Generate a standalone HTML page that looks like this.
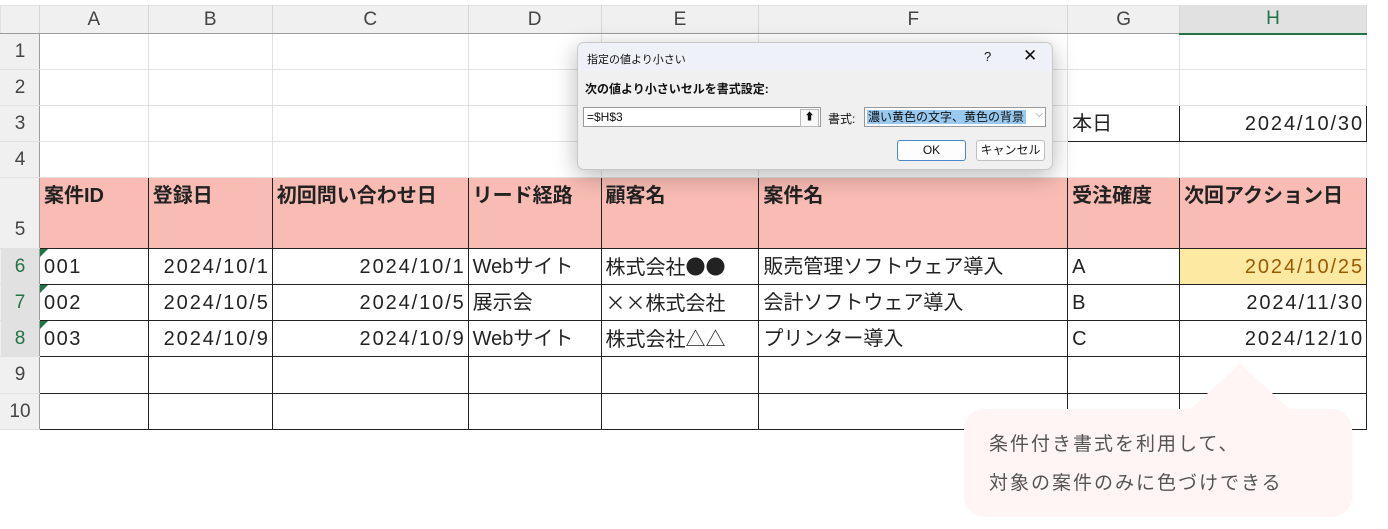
<!DOCTYPE html>
<html><head><meta charset="utf-8"><style>
body{margin:0;width:1388px;height:529px;background:#fff;position:relative;overflow:hidden;font-family:"Liberation Sans","Noto Sans CJK JP",sans-serif}
table{position:absolute;left:0;top:5px;border-collapse:collapse;table-layout:fixed}
td{padding:0 4px;font-size:20px;color:#222;border:1px solid #e1e1e1;white-space:nowrap;overflow:hidden;vertical-align:middle;line-height:24px}
td.rh{background:#f0f0f0;color:#444;text-align:center;font-size:19px;border-color:#e1e1e1 #9c9c9c #e1e1e1 #f0f0f0;letter-spacing:0}
td.rh.sel{background:#e1e1e1;color:#217346}
tr.ch td{background:#f0f0f0;color:#444;text-align:center;font-size:19px;border-bottom:1px solid #9c9c9c;border-right-color:#d6d6d6}
tr.ch td.sel{background:#e1e1e1;color:#217346;border-bottom:2px solid #217346}
td.b{border:1px solid #222}
td.hd{background:#f8bcb4;font-weight:bold;vertical-align:top;padding-top:6px;border:1px solid #222}
td.r{text-align:right;letter-spacing:1.9px;padding-right:2px}
.j{font-family:"Noto Sans CJK JP",sans-serif}
.tri{position:relative;letter-spacing:1.5px}
.tri:before{content:"";position:absolute;left:0;top:0;border-top:8px solid #217346;border-right:8px solid transparent}
.dlg{position:absolute;left:577px;top:42px;width:474px;height:126px;background:#f0f0f0;border:1px solid #c8c8c8;border-radius:7px;box-shadow:0 6px 24px rgba(0,0,0,.28);font-size:11px;color:#111;overflow:hidden}
.tb{height:28px;background:#eef1f7;position:relative}
</style></head><body>
<table>
<colgroup><col style="width:39px"><col style="width:109px"><col style="width:124px"><col style="width:196px"><col style="width:133px"><col style="width:158px"><col style="width:309px"><col style="width:112px"><col style="width:187px"><col style="width:21px"></colgroup>
<tr class="ch" style="height:28px"><td style="background:#f0f0f0"></td><td>A</td><td>B</td><td>C</td><td>D</td><td>E</td><td>F</td><td>G</td><td class="sel">H</td><td style="background:#fff;border:none"></td></tr>
<tr style="height:36px"><td class="rh">1</td><td></td><td></td><td></td><td></td><td></td><td></td><td></td><td></td><td style="border:none"></td></tr>
<tr style="height:36px"><td class="rh">2</td><td></td><td></td><td></td><td></td><td></td><td></td><td></td><td></td><td style="border:none"></td></tr>
<tr style="height:36px"><td class="rh">3</td><td></td><td></td><td></td><td></td><td></td><td></td><td class="b">本日</td><td class="b r">2024/10/30</td><td style="border:none"></td></tr>
<tr style="height:36px"><td class="rh">4</td><td></td><td></td><td></td><td></td><td></td><td></td><td></td><td></td><td style="border:none"></td></tr>
<tr style="height:71px"><td class="rh" style="vertical-align:bottom;padding-bottom:6px">5</td><td class="hd">案件ID</td><td class="hd">登録日</td><td class="hd">初回問い合わせ日</td><td class="hd">リード経路</td><td class="hd">顧客名</td><td class="hd">案件名</td><td class="hd">受注確度</td><td class="hd">次回アクション日</td><td style="border:none"></td></tr>
<tr style="height:36px"><td class="rh sel">6</td><td class="b tri">001</td><td class="b r">2024/10/1</td><td class="b r">2024/10/1</td><td class="b">Webサイト</td><td class="b">株式会社<span class="j">●●</span></td><td class="b">販売管理ソフトウェア導入</td><td class="b">A</td><td class="b r" style="background:#fee9a2;color:#9c5a00">2024/10/25</td><td style="border:none"></td></tr>
<tr style="height:36px"><td class="rh sel">7</td><td class="b tri">002</td><td class="b r">2024/10/5</td><td class="b r">2024/10/5</td><td class="b">展示会</td><td class="b"><span class="j">××</span>株式会社</td><td class="b">会計ソフトウェア導入</td><td class="b">B</td><td class="b r">2024/11/30</td><td style="border:none"></td></tr>
<tr style="height:36px"><td class="rh sel">8</td><td class="b tri">003</td><td class="b r">2024/10/9</td><td class="b r">2024/10/9</td><td class="b">Webサイト</td><td class="b">株式会社<span class="j">△△</span></td><td class="b">プリンター導入</td><td class="b">C</td><td class="b r">2024/12/10</td><td style="border:none"></td></tr>
<tr style="height:37px"><td class="rh">9</td><td class="b"></td><td class="b"></td><td class="b"></td><td class="b"></td><td class="b"></td><td class="b"></td><td class="b"></td><td class="b"></td><td style="border:none"></td></tr>
<tr style="height:36px"><td class="rh">10</td><td class="b"></td><td class="b"></td><td class="b"></td><td class="b"></td><td class="b"></td><td class="b"></td><td class="b"></td><td class="b"></td><td style="border:none"></td></tr>
</table>
<svg style="position:absolute;left:1180px;top:360px" width="120" height="60"><polygon points="60,3 10,50 110,50" fill="#fef5f4"/></svg>
<div style="position:absolute;left:964px;top:409px;width:388px;height:108px;background:#fef5f4;border-radius:20px;font-size:19px;color:#555;letter-spacing:2px;line-height:39px;padding:16px 0 0 25px;box-sizing:border-box">条件付き書式を利用して、<br>対象の案件のみに色づけできる</div>
<div class="dlg">
<div class="tb"><span style="position:absolute;left:9px;top:8px">指定の値より小さい</span><span style="position:absolute;left:406px;top:6px;font-size:13px">?</span><span style="position:absolute;left:445px;top:3px;font-size:17px">✕</span></div>
<div style="position:absolute;left:7px;top:37px;font-weight:bold;font-size:12px">次の値より小さいセルを書式設定:</div>
<div style="position:absolute;left:5px;top:64px;width:233px;height:18px;background:#fff;border:1px solid #999;font-size:12px;line-height:18px;padding-left:3px">=$H$3<span style="position:absolute;right:1px;top:1px;width:17px;height:16px;border:1px solid #bbb;background:#f8f8f8;text-align:center;line-height:15px;font-size:10px;font-weight:bold">⬆</span></div>
<span style="position:absolute;left:250px;top:67px;font-size:12px">書式:</span>
<div style="position:absolute;left:286px;top:64px;width:180px;height:18px;background:#fff;border:1px solid #999"><div style="position:absolute;left:2px;top:2px;width:158px;height:14px;background:#99c9ef;font-size:12px;line-height:14px;padding-left:1px;overflow:hidden">濃い黄色の文字、黄色の背景</div><span style="position:absolute;right:2px;top:1px;font-size:10px;color:#777">⌵</span></div>
<div style="position:absolute;left:319px;top:97px;width:67px;height:19px;background:#fdfdfd;border:1px solid #4a86c8;border-radius:3px;text-align:center;line-height:19px;font-size:12px">OK</div>
<div style="position:absolute;left:398px;top:97px;width:67px;height:19px;background:#fdfdfd;border:1px solid #c0c0c0;border-radius:3px;text-align:center;line-height:19px;font-size:12px">キャンセル</div>
</div>
</body></html>
